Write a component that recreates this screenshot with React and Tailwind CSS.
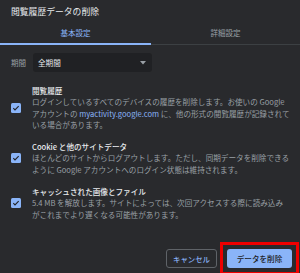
import React from "react";

const font = { fontFamily: '"Noto Sans CJK JP", "Noto Sans", sans-serif' };

function Check() {
  return (
    <div className="w-[10px] h-[10px] rounded-[1.5px] bg-[#8ab4f8] flex items-center justify-center shrink-0">
      <svg width="8" height="8" viewBox="0 0 24 24">
        <path d="M4 12.5l5 5L20 6.5" fill="none" stroke="#202124" strokeWidth="3.4" />
      </svg>
    </div>
  );
}

function Item({ title, children, className }) {
  return (
    <div className={"flex items-center " + className}>
      <div className="w-[32px] pl-[11px] flex">
        <Check />
      </div>
      <div className="flex-1 pr-[10px]">
        <div className="text-[7.6px] leading-[11.5px] text-[#e8eaed] font-medium">{title}</div>
        <div className="text-[7.6px] leading-[11.5px] text-[#9aa0a6]">{children}</div>
      </div>
    </div>
  );
}

export default function App() {
  return (
    <div className="w-[300px] h-[273px] bg-[#292a2d] overflow-hidden" style={font}>
      <div className="pl-[11px] pt-[6px] h-[22px] text-[8.8px] leading-[12px] text-[#e8eaed]">
        閲覧履歴データの削除
      </div>
      <div className="flex h-[23px] border-b border-[#3c4043] relative">
        <div className="w-[151px] flex items-center justify-center text-[7.5px] text-[#8ab4f8] border-b-2 border-[#8ab4f8] -mb-[1px]">
          基本設定
        </div>
        <div className="flex-1 flex items-center justify-center text-[7.5px] text-[#9aa0a6]">
          詳細設定
        </div>
      </div>
      <div className="flex items-center mt-[8px] h-[19px]">
        <div className="w-[33px] pl-[11px] text-[7.5px] text-[#9aa0a6]">期間</div>
        <div className="w-[119px] h-[19px] bg-[#202124] rounded-[3px] flex items-center justify-between pl-[5px] pr-[6px]">
          <span className="text-[7.6px] text-[#e8eaed]">全期間</span>
          <svg width="6" height="4" viewBox="0 0 6 4">
            <path d="M0 0h6L3 3.5z" fill="#9aa0a6" />
          </svg>
        </div>
      </div>
      <Item title="閲覧履歴" className="mt-[12px] h-[47px]">
        ログインしているすべてのデバイスの履歴を削除します。お使いの Google アカウントの{" "}
        <span className="inline-block leading-[11.5px] text-[#8ab4f8]">myactivity.google.com</span> に、他の形式の閲覧履歴が記録されている場合があります。
      </Item>
      <Item title="Cookie と他のサイトデータ" className="mt-[9px] h-[36px]">
        ほとんどのサイトからログアウトします。ただし、同期データを削除できるように Google アカウントへのログイン状態は維持されます。
      </Item>
      <Item title="キャッシュされた画像とファイル" className="mt-[9px] h-[36px]">
        5.4 MB を解放します。サイトによっては、次回アクセスする際に読み込みがこれまでより遅くなる可能性があります。
      </Item>
      <div className="flex justify-end items-center mt-[21px] pr-[1px] gap-[3px]">
        <div className="w-[51px] h-[19px] border border-[#5f6368] rounded-[3px] flex items-center justify-center text-[7.4px] text-[#8ab4f8] font-medium">
          キャンセル
        </div>
        <div className="border-[3px] border-[#e00] p-[4px]">
          <div className="w-[65px] h-[19px] bg-[#8ab4f8] rounded-[3px] flex items-center justify-center text-[7.6px] text-[#202124] font-medium">
            データを削除
          </div>
        </div>
      </div>
    </div>
  );
}
